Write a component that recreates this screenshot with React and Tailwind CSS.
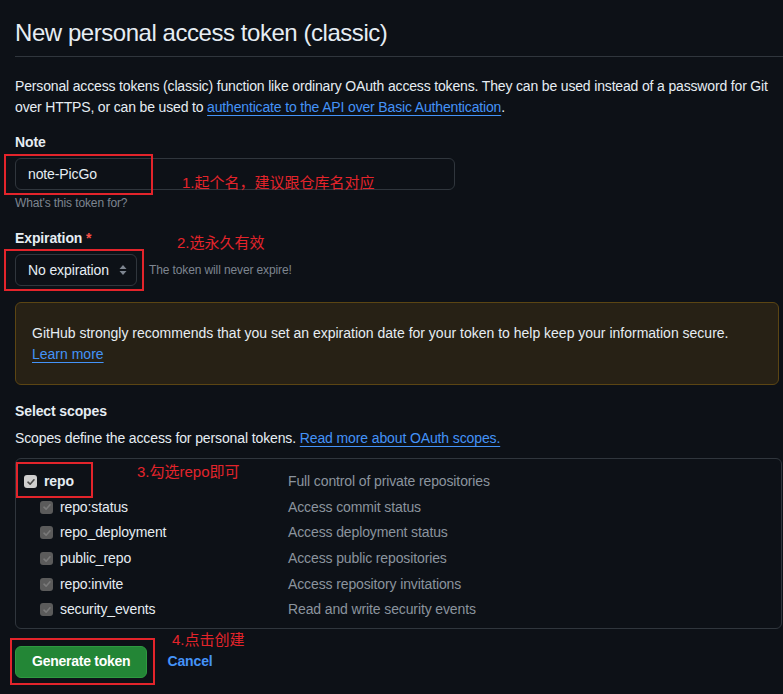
import React from "react";

const font = { fontFamily: '"Liberation Sans", "Noto Sans CJK SC", sans-serif' };

function Check({ parent }) {
  return (
    <span
      className={
        "inline-flex items-center justify-center w-[13px] h-[13px] rounded-[3px] shrink-0 " +
        (parent ? "bg-[#cfcfcf]" : "bg-[#5b5b5b]")
      }
    >
      <svg width="10" height="10" viewBox="0 0 10 10" fill="none">
        <path
          d="M2 5.2 L4.1 7.2 L8 2.8"
          stroke={parent ? "#4a4a4a" : "#7a7a7a"}
          strokeWidth="1.6"
          strokeLinecap="round"
          strokeLinejoin="round"
        />
      </svg>
    </span>
  );
}

const rows = [
  ["repo:status", "Access commit status"],
  ["repo_deployment", "Access deployment status"],
  ["public_repo", "Access public repositories"],
  ["repo:invite", "Access repository invitations"],
  ["security_events", "Read and write security events"],
];

function Note({ className, children }) {
  return (
    <div
      className={"absolute text-[15px] leading-[18px] tracking-normal text-[#e3242b] whitespace-nowrap " + className}
    >
      {children}
    </div>
  );
}

function Box({ className }) {
  return <div className={"absolute border-2 border-[#e3242b] pointer-events-none " + className} />;
}

export default function App() {
  return (
    <div
      className="relative w-[783px] h-[694px] overflow-hidden bg-[#0d1117] text-[#e6edf3] pl-[15px] pr-[1px] tracking-[-0.12px]"
      style={font}
    >
      <div className="pt-[15px] pb-[5px] border-b border-[#30363d] -mr-[1px]">
        <h1 className="text-[24px] leading-[36px] font-normal tracking-[-0.45px]">New personal access token (classic)</h1>
      </div>

      <p className="mt-[19px] text-[14px] leading-[21px] pr-0 tracking-[-0.16px]">
        Personal access tokens (classic) function like ordinary OAuth access tokens. They can be used instead of a password for Git over HTTPS, or can be used to{" "}
        <a className="text-[#4493f8] underline underline-offset-[3px]">authenticate to the API over Basic Authentication</a>.
      </p>

      <div className="mt-[14px] text-[14px] leading-[21px] font-bold">Note</div>
      <div className="mt-[5px] w-[440px] h-[32px] border border-[#30363d] rounded-[6px] bg-[#0d1117] flex items-center px-[12px] text-[14px]">
        note-PicGo
      </div>
      <div className="mt-[4px] text-[12px] leading-[18px] text-[#7d8590]">What's this token for?</div>

      <div className="mt-[16px] text-[14px] leading-[21px] font-bold">
        Expiration <span className="text-[#f85149]">*</span>
      </div>
      <div className="mt-[5px] flex items-center gap-[12px]">
        <div className="w-[122px] h-[32px] border border-[#30363d] rounded-[6px] bg-[#0d1117] flex items-center justify-between pl-[12px] pr-[8px] text-[14px]">
          <span>No expiration</span>
          <svg width="10" height="14" viewBox="0 0 10 14">
            <path d="M5 2 L8.5 6 H1.5 Z" fill="#7d8590" />
            <path d="M5 12 L8.5 8 H1.5 Z" fill="#7d8590" />
          </svg>
        </div>
        <span className="text-[12px] text-[#7d8590]">The token will never expire!</span>
      </div>

      <div className="mt-[16px] mr-[3px] border border-[#5b4513] bg-[#272115] rounded-[6px] pt-[20px] pb-[19px] px-[16px] text-[14px] leading-[21px] tracking-normal">
        <div>GitHub strongly recommends that you set an expiration date for your token to help keep your information secure.</div>
        <div className="text-[#4493f8] underline underline-offset-[3px]">Learn more</div>
      </div>

      <div className="mt-[16px] text-[14px] leading-[21px] font-bold">Select scopes</div>
      <div className="mt-[6px] text-[14px] leading-[21px]">
        Scopes define the access for personal tokens.{" "}
        <a className="text-[#4493f8] underline underline-offset-[3px]">Read more about OAuth scopes.</a>
      </div>

      <div className="mt-[9px] border border-[#30363d] rounded-[6px] pt-[10px] pb-[5px] text-[14px]">
        <div className="flex items-center h-[25.6px]">
          <div className="flex items-center gap-[7px] pl-[8px] w-[272px]">
            <Check parent />
            <span className="font-bold">repo</span>
          </div>
          <span className="text-[#8b949e]">Full control of private repositories</span>
        </div>
        {rows.map(([n, d]) => (
          <div key={n} className="flex items-center h-[25.6px]">
            <div className="flex items-center gap-[7px] pl-[24px] w-[272px]">
              <Check />
              <span>{n}</span>
            </div>
            <span className="text-[#8b949e]">{d}</span>
          </div>
        ))}
      </div>

      <div className="mt-[17px] flex items-center gap-[20px]">
        <button className="h-[32px] px-[16px] rounded-[6px] bg-[#238636] border border-[#2e9a40] text-white text-[14px] font-bold tracking-[-0.25px]">
          Generate token
        </button>
        <span className="text-[#4493f8] text-[14px] font-bold">Cancel</span>
      </div>

      <Box className="left-[4px] top-[154px] w-[149px] h-[41px]" />
      <Note className="left-[182px] top-[174px]">1.起个名，建议跟仓库名对应</Note>
      <Box className="left-[4px] top-[249px] w-[140px] h-[42px]" />
      <Note className="left-[177px] top-[234px]">2.选永久有效</Note>
      <Box className="left-[16px] top-[462px] w-[77px] h-[36px]" />
      <Note className="left-[137px] top-[463px]">3.勾选repo即可</Note>
      <Box className="left-[10px] top-[638px] w-[145px] h-[47px]" />
      <Note className="left-[172px] top-[631px]">4.点击创建</Note>
    </div>
  );
}
